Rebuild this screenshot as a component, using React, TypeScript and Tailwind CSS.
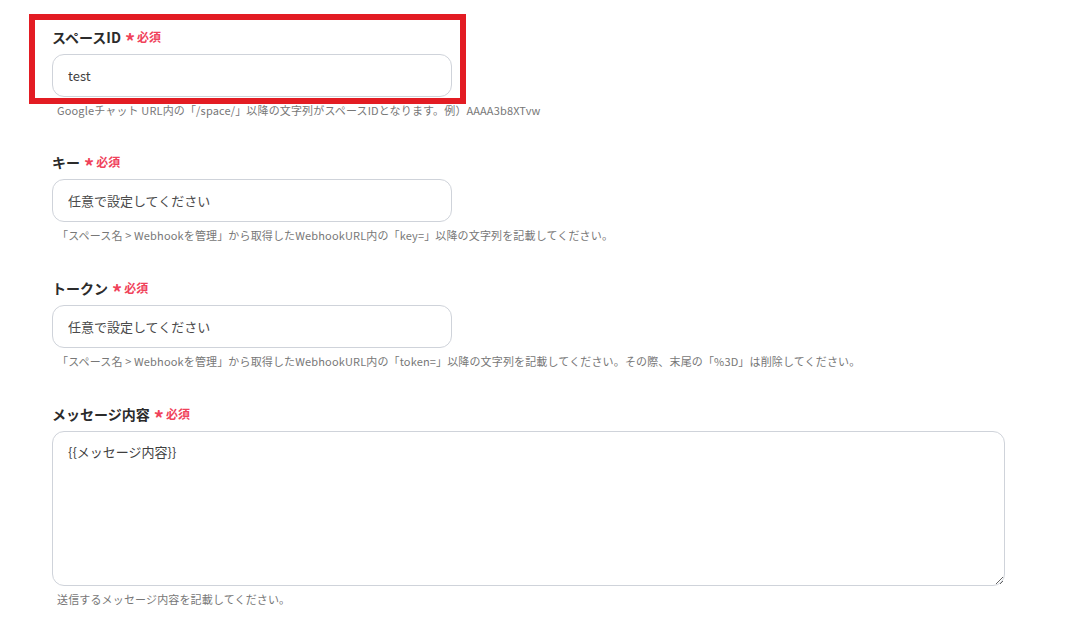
import React from 'react';

interface FieldProps {
  label: string;
  value?: string;
  placeholder?: string;
  help: string;
  multiline?: boolean;
  className?: string;
}

function Field({ label, value, placeholder, help, multiline, className }: FieldProps) {
  return (
    <div className={`flex flex-col ${className ?? ''}`}>
      <div className="flex items-center h-[18px]">
        <span className="text-[14px] font-bold text-[#2b2b2b] leading-[18px]">{label}</span>
        <span className="ml-[4px] text-[20px] font-bold text-[#f0425a] leading-[18px] mt-[7px]">*</span>
        <span className="ml-[2px] text-[12px] font-bold text-[#f0425a] leading-[18px]">必須</span>
      </div>
      {multiline ? (
        <textarea
          defaultValue={value}
          className="mt-2 w-[953px] h-[155px] rounded-[12px] border border-[#cfd3da] bg-white px-[15px] py-[10px] text-[13px] text-[#3f3f3f] outline-none"
        />
      ) : (
        <input
          defaultValue={value}
          placeholder={placeholder}
          className="mt-2 w-[400px] h-[43px] rounded-[12px] border border-[#cfd3da] bg-white px-[15px] text-[13px] text-[#3f3f3f] placeholder:text-[#4a4a4a] outline-none"
        />
      )}
      <p className="mt-[5px] pl-[5px] text-[11px] leading-4 tracking-[0.15px] text-[#777]">{help}</p>
    </div>
  );
}

export default function App() {
  return (
    <div
      className="relative min-h-[639px] bg-white pl-[52px] pt-[28px]"
      style={{ fontFamily: '"Noto Sans CJK JP", "Noto Sans", sans-serif' }}
    >
      <div className="flex flex-col gap-[36px]">
        <Field
          label="スペースID"
          value="test"
          help="Googleチャット URL内の「/space/」以降の文字列がスペースIDとなります。例）AAAA3b8XTvw"
          className="-mb-[1px]"
        />
        <Field
          label="キー"
          placeholder="任意で設定してください"
          help="「スペース名 > Webhookを管理」から取得したWebhookURL内の「key=」以降の文字列を記載してください。"
        />
        <Field
          label="トークン"
          placeholder="任意で設定してください"
          help="「スペース名 > Webhookを管理」から取得したWebhookURL内の「token=」以降の文字列を記載してください。その際、末尾の「%3D」は削除してください。"
        />
        <Field
          label="メッセージ内容"
          value="{{メッセージ内容}}"
          help="送信するメッセージ内容を記載してください。"
          multiline
        />
      </div>
      <div className="absolute left-[29px] top-[14px] w-[437px] h-[90px] border-[6px] border-[#e31c23] pointer-events-none" />
    </div>
  );
}
